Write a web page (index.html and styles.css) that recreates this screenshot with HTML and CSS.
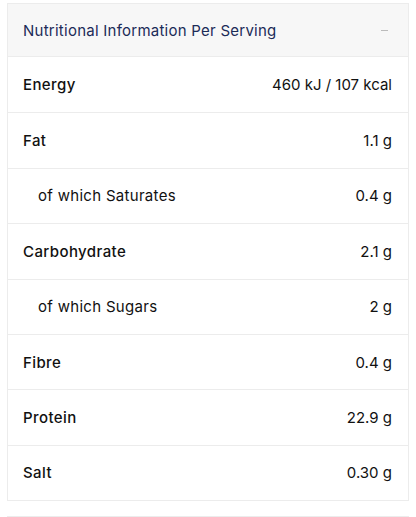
FILE: index.html
```html
<!DOCTYPE html>
<html>
<head>
  <meta charset="utf-8">
  <link rel="stylesheet" href="styles.css">
</head>
<body>
  <div class="page">
    <div class="panel">
      <div class="panel-head">
        <span class="panel-title">Nutritional Information Per Serving</span>
        <span class="toggle"></span>
      </div>
      <div class="row"><span>Energy</span><span>460 kJ / 107 kcal</span></div>
      <div class="row"><span>Fat</span><span>1.1 g</span></div>
      <div class="row sub"><span>of which Saturates</span><span>0.4 g</span></div>
      <div class="row"><span>Carbohydrate</span><span>2.1 g</span></div>
      <div class="row sub"><span>of which Sugars</span><span>2 g</span></div>
      <div class="row"><span>Fibre</span><span>0.4 g</span></div>
      <div class="row"><span>Protein</span><span>22.9 g</span></div>
      <div class="row"><span>Salt</span><span>0.30 g</span></div>
    </div>
    <div class="panel next"></div>
  </div>
</body>
</html>
```

FILE: styles.css
```css
body { margin: 0; font-family: Inter, "Noto Sans", sans-serif; color: #111; background: #fff; }
.page { padding: 3px 7px 0 7px; }
.panel { border: 1px solid #ececec; }
.panel-head { height: 52px; background: #f7f7f7; border-bottom: 1px solid #ececec; display: flex; align-items: center; justify-content: space-between; padding: 0 20px 0 15px; }
.panel-title { font-size: 15px; color: #1b2b58; letter-spacing: 0.25px; }
.toggle { width: 7px; height: 1px; background: #bbb; }
.row { box-sizing: border-box; height: 55.4px; display: flex; align-items: center; justify-content: space-between; padding: 0 16px 0 15px; border-top: 1px solid #ececec; font-size: 15px; }
.panel-head + .row { border-top: none; }
.row span:first-child { font-weight: 500; letter-spacing: 0.4px; }
.row.sub { padding-left: 30px; }
.row.sub span:first-child { font-weight: 400; letter-spacing: 0.3px; }
.next { margin-top: 15px; height: 20px; background: #f7f7f7; border-bottom: none; }
```
